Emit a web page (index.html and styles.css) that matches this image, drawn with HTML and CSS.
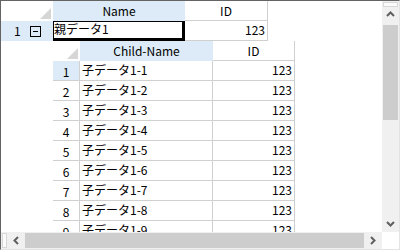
FILE: index.html
```html
<!DOCTYPE html>
<html>
<head>
	<meta charset="utf-8">
	<title>Grid</title>
	<link rel="stylesheet" href="styles.css">
</head>
<body>
	<div class="frame">
		<div class="view">
			<div class="row head">
				<div class="cell corner w52"><span class="tri"></span></div>
				<div class="cell hd blue w132">Name</div>
				<div class="cell hd line w83">ID</div>
			</div>
			<div class="row">
				<div class="cell rowhd blue w52"><span class="rnum">1</span><span class="minus"></span></div>
				<div class="cell current w132">親データ1</div>
				<div class="cell line right w83">123</div>
			</div>
			<div class="child">
				<div class="row head">
					<div class="cell corner w27"><span class="tri"></span></div>
					<div class="cell hd blue w133">Child-Name</div>
					<div class="cell hd line w82">ID</div>
				</div>
				<div class="row">
					<div class="cell crh blue w27">1</div>
					<div class="cell line w133">子データ1-1</div>
					<div class="cell line right w82">123</div>
				</div>
				<div class="row">
					<div class="cell crh w27">2</div>
					<div class="cell line w133">子データ1-2</div>
					<div class="cell line right w82">123</div>
				</div>
				<div class="row">
					<div class="cell crh w27">3</div>
					<div class="cell line w133">子データ1-3</div>
					<div class="cell line right w82">123</div>
				</div>
				<div class="row">
					<div class="cell crh w27">4</div>
					<div class="cell line w133">子データ1-4</div>
					<div class="cell line right w82">123</div>
				</div>
				<div class="row">
					<div class="cell crh w27">5</div>
					<div class="cell line w133">子データ1-5</div>
					<div class="cell line right w82">123</div>
				</div>
				<div class="row">
					<div class="cell crh w27">6</div>
					<div class="cell line w133">子データ1-6</div>
					<div class="cell line right w82">123</div>
				</div>
				<div class="row">
					<div class="cell crh w27">7</div>
					<div class="cell line w133">子データ1-7</div>
					<div class="cell line right w82">123</div>
				</div>
				<div class="row">
					<div class="cell crh w27">8</div>
					<div class="cell line w133">子データ1-8</div>
					<div class="cell line right w82">123</div>
				</div>
				<div class="row">
					<div class="cell crh w27">9</div>
					<div class="cell line w133">子データ1-9</div>
					<div class="cell line right w82">123</div>
				</div>
			</div>
		</div>
		<div class="vscroll">
			<div class="grip-h"></div>
			<div class="arrow up"><svg width="9" height="6" viewBox="0 0 9 6"><path d="M1 5 L4.5 1.5 L8 5" fill="none" stroke="#606060" stroke-width="2"/></svg></div>
			<div class="vthumb"></div>
			<div class="track"></div>
			<div class="arrow"><svg width="9" height="6" viewBox="0 0 9 6"><path d="M1 1 L4.5 4.5 L8 1" fill="none" stroke="#606060" stroke-width="2"/></svg></div>
		</div>
		<div class="hscroll">
			<div class="grip-v"></div>
			<div class="arrow side"><svg width="6" height="9" viewBox="0 0 6 9"><path d="M5 1 L1.5 4.5 L5 8" fill="none" stroke="#606060" stroke-width="2"/></svg></div>
			<div class="hthumb"></div>
			<div class="arrow side"><svg width="6" height="9" viewBox="0 0 6 9"><path d="M1 1 L4.5 4.5 L1 8" fill="none" stroke="#606060" stroke-width="2"/></svg></div>
		</div>
		<div class="sizer"></div>
	</div>
</body>
</html>
```

FILE: styles.css
```css
body{
	margin:0;
	background:#ffffff;
	font-family:"Noto Sans CJK JP","DejaVu Sans",sans-serif;
	font-size:12px;
	color:#000000;
}
.frame{
	width:400px;
	height:250px;
	box-sizing:border-box;
	border-left:1px solid #646464;
	border-top:1px solid #646464;
	border-right:1px solid #e3e3e3;
	border-bottom:1px solid #e3e3e3;
	display:grid;
	grid-template-columns:381px 17px;
	grid-template-rows:231px 17px;
}
.view{
	overflow:hidden;
	background:#ffffff;
}
.row{
	display:flex;
	height:20px;
}
.cell{
	box-sizing:border-box;
	height:20px;
	line-height:18px;
	padding:0 2px;
	white-space:nowrap;
	overflow:hidden;
	flex:none;
}
.w52{ width:52px; }
.w132{ width:132px; }
.w83{ width:83px; }
.w27{ width:27px; }
.w133{ width:133px; }
.w82{ width:82px; }
.blue{ background:#dcebf7; }
.hd{
	text-align:center;
	line-height:19px;
}
.line{
	border-right:1px solid #d0d0d0;
	border-bottom:1px solid #d0d0d0;
}
.right{ text-align:right; }
.corner{
	position:relative;
}
.tri{
	position:absolute;
	right:2px;
	bottom:2px;
	width:0;
	height:0;
	border-left:11px solid transparent;
	border-bottom:11px solid #d6d6d6;
}
.rowhd{
	display:flex;
	align-items:center;
	padding-left:13px;
}
.rnum{
	width:16px;
}
.minus{
	position:relative;
	width:9px;
	height:9px;
	border:1px solid #000000;
}
.minus::after{
	content:"";
	position:absolute;
	left:2px;
	top:4px;
	width:5px;
	height:1px;
	background:#000000;
}
.current{
	border-top:1px solid #000000;
	border-left:1px solid #000000;
	border-right:3px solid #000000;
	border-bottom:3px solid #000000;
	padding-left:0;
	line-height:14px;
}
.child{
	margin-left:52px;
}
.crh{
	text-align:center;
	border-right:1px solid #d0d0d0;
	border-bottom:1px solid #d0d0d0;
	line-height:21px;
}
.child .line.w133{
	padding-left:2px;
}
.vscroll{
	background:#f0f0f0;
	display:flex;
	flex-direction:column;
	align-items:center;
}
.grip-h{
	width:13px;
	height:3px;
	margin-top:1px;
	border:1px solid #d8d8d8;
	background:#fbfbfb;
}
.arrow{
	width:17px;
	height:17px;
	display:flex;
	align-items:center;
	justify-content:center;
	flex:none;
}
.arrow.up{
	height:14px;
	margin-bottom:4px;
}
.vthumb{
	width:15px;
	height:95px;
	background:#cdcdcd;
	flex:none;
}
.track{
	flex:1;
}
.hscroll{
	background:#f0f0f0;
	display:flex;
	align-items:center;
}
.grip-v{
	width:3px;
	height:13px;
	margin-left:1px;
	border:1px solid #d8d8d8;
	background:#fbfbfb;
	flex:none;
}
.arrow.side{
	width:18px;
}
.hthumb{
	flex:1;
	height:15px;
	background:#cdcdcd;
}
.sizer{
	background:#ffffff;
}
```
